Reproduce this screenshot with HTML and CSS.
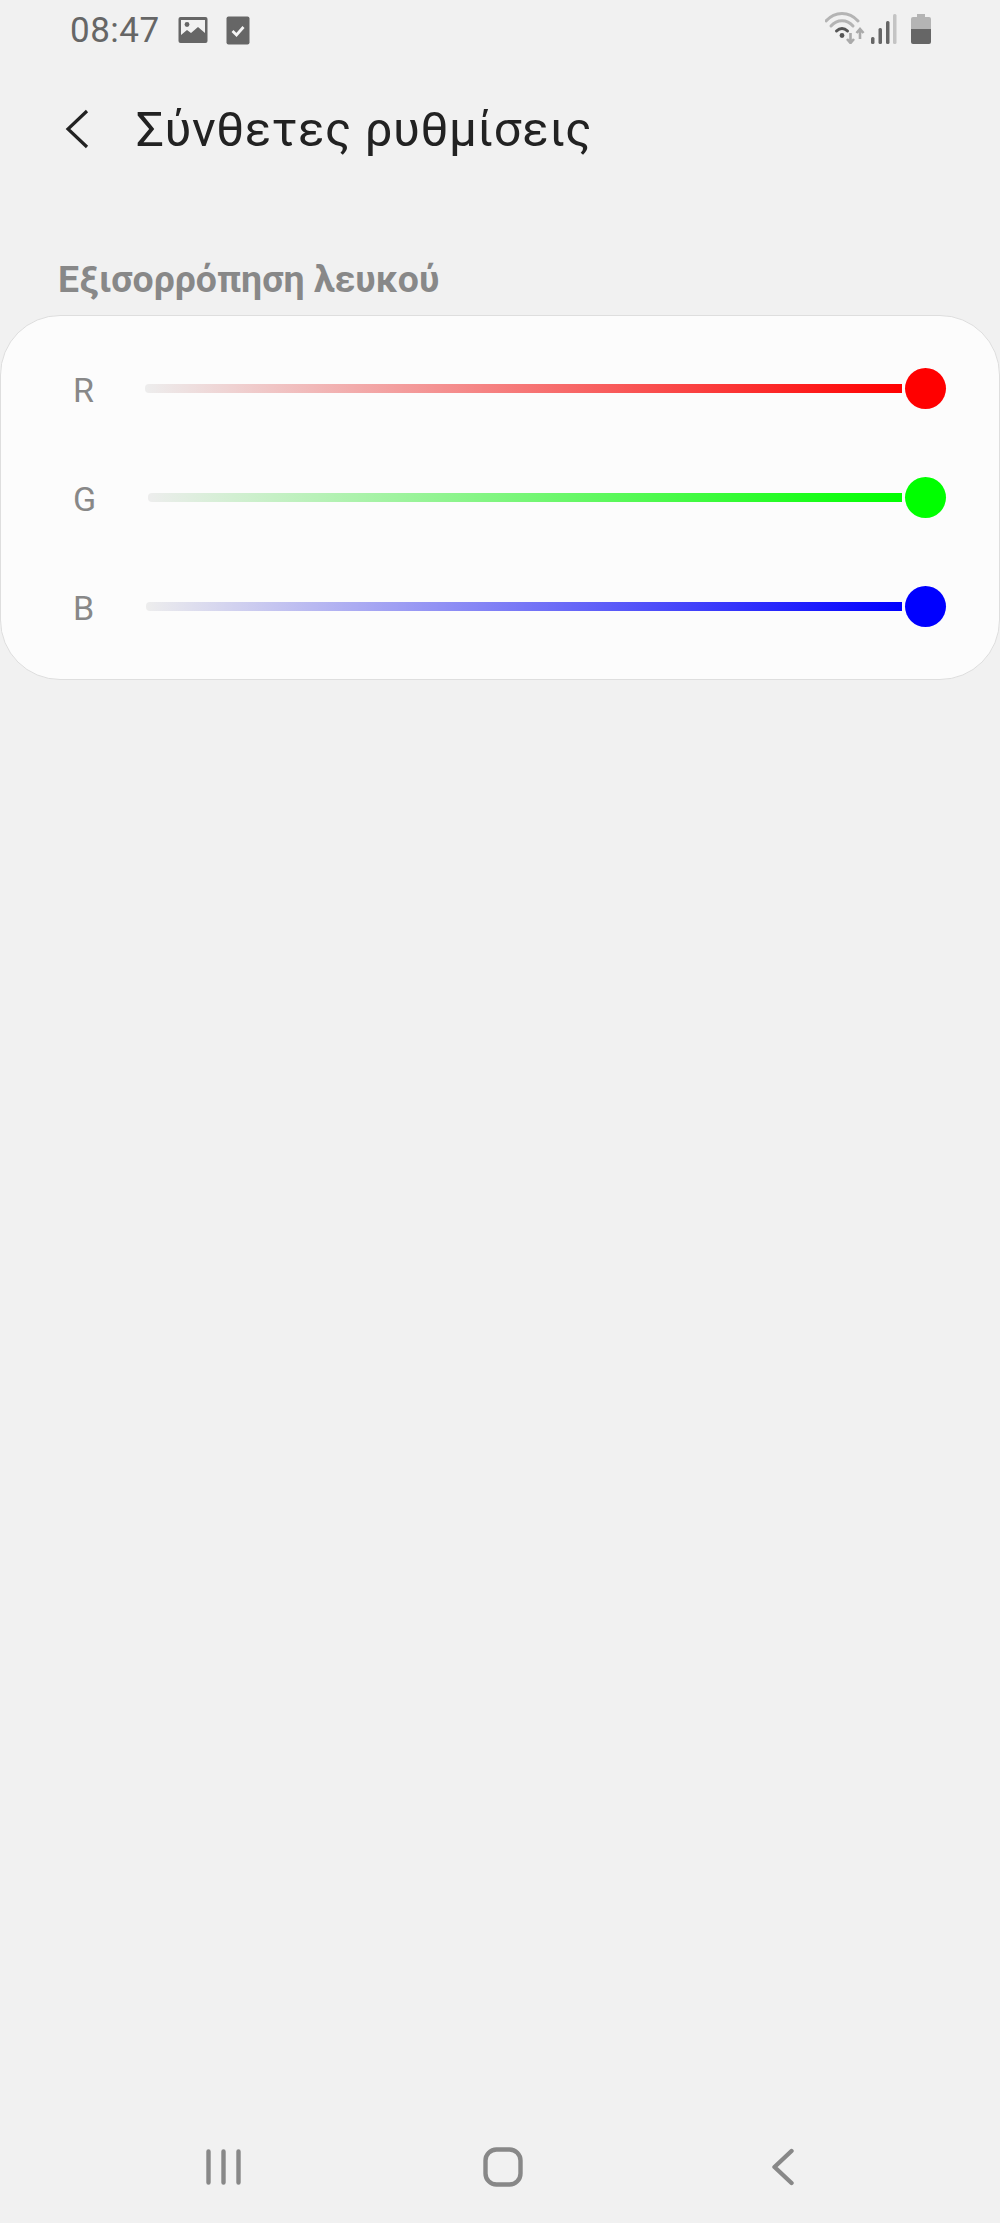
FILE: index.html
```html
<!DOCTYPE html>
<html lang="el">
<head>
  <meta charset="UTF-8">
  <meta name="viewport" content="width=device-width, initial-scale=1">
  <title>Σύνθετες ρυθμίσεις</title>
  <link rel="stylesheet" href="styles.css">
</head>
<body>

  <div class="status">
    <span class="hora">08:47</span>
    <svg class="ico-foto" width="30" height="28" viewBox="0 0 30 28">
      <rect x="0.5" y="1" width="29" height="26" rx="2" fill="#666"/>
      <rect x="3" y="4" width="24" height="17" fill="#f1f1f1"/>
      <circle cx="9" cy="8.500" r="2.400" fill="#666"/>
      <path d="M3 19l6-5 4 3 7-6 7 6v6H3z" fill="#666"/>
    </svg>
    <svg class="ico-check" width="24" height="29" viewBox="0 0 24 29">
      <rect x="0.5" y="0.5" width="23" height="28" rx="2" fill="#666"/>
      <path d="M6.500 15l4 4 7-8" fill="none" stroke="#f5f5f5" stroke-width="2.800"/>
    </svg>
    <div class="status-dir">
      <svg width="50" height="32" viewBox="0 0 50 32">
        <path d="M1 9C10-1 24-1 33 9" fill="none" stroke="#b4b4b4" stroke-width="3" stroke-linecap="round"/>
        <path d="M6 14c6-7 16-7 22 0" fill="none" stroke="#b4b4b4" stroke-width="3" stroke-linecap="round"/>
        <path d="M11.500 19c3.500-3.500 7.500-3.500 11 0" fill="none" stroke="#555" stroke-width="3" stroke-linecap="round"/>
        <circle cx="17" cy="23.500" r="2.400" fill="#555"/>
        <path d="M25.500 21v10M22 27l3.500 4 3.500-4" fill="none" stroke="#aaa" stroke-width="2.600"/>
        <path d="M35 27V17M31.500 21l3.500-4 3.500 4" fill="none" stroke="#aaa" stroke-width="2.600"/>
      </svg>
      <svg class="ico-sinal" width="26" height="30" viewBox="0 0 26 30">
        <rect x="0" y="23" width="3.500" height="7" rx="1.500" fill="#666"/>
        <rect x="7.500" y="14" width="3.500" height="16" rx="1.500" fill="#666"/>
        <rect x="15" y="7" width="3.500" height="23" rx="1.500" fill="#666"/>
        <rect x="22" y="0" width="3.500" height="30" rx="1.500" fill="#c4c4c4"/>
      </svg>
      <svg class="ico-bateria" width="20" height="30" viewBox="0 0 20 30">
        <path d="M6 0h8v3h4a2 2 0 0 1 2 2v10H0V5a2 2 0 0 1 2-2h4z" fill="#b4b4b4"/>
        <path d="M0 15h20v13a2 2 0 0 1-2 2H2a2 2 0 0 1-2-2z" fill="#666"/>
      </svg>
    </div>
  </div>

  <div class="topo">
    <svg class="voltar" width="24" height="40" viewBox="0 0 24 40">
      <path d="M22 2L3 20l19 18" fill="none" stroke="#222" stroke-width="3.200"/>
    </svg>
    <h1>Σύνθετες ρυθμίσεις</h1>
  </div>

  <h2>Εξισορρόπηση λευκού</h2>

  <div class="cartao">
    <div class="linha linha-r">
      <span class="letra">R</span>
      <div class="faixa"></div>
      <div class="bola"></div>
    </div>
    <div class="linha linha-g">
      <span class="letra">G</span>
      <div class="faixa"></div>
      <div class="bola"></div>
    </div>
    <div class="linha linha-b">
      <span class="letra">B</span>
      <div class="faixa"></div>
      <div class="bola"></div>
    </div>
  </div>

  <div class="nav">
    <svg width="35" height="36" viewBox="0 0 35 36">
      <path d="M2.500 2.500v31M17.500 2.500v31M32.500 2.500v31" fill="none" stroke="#888" stroke-width="4.400" stroke-linecap="round"/>
    </svg>
    <svg width="40" height="40" viewBox="0 0 40 40">
      <rect x="2.500" y="2.500" width="35" height="35" rx="11" fill="none" stroke="#888" stroke-width="4.400"/>
    </svg>
    <svg width="22" height="38" viewBox="0 0 22 38">
      <path d="M19.500 3L2.500 19l17 16" fill="none" stroke="#888" stroke-width="4.400" stroke-linecap="round" stroke-linejoin="round"/>
    </svg>
  </div>

</body>
</html>
```

FILE: styles.css
```css
* {
  box-sizing: border-box;
  margin: 0;
  padding: 0;
  font-family: 'Roboto', sans-serif;
}
html, body {
  height: 100%;
}
body {
  background: #f1f1f1;
  display: flex;
  flex-direction: column;
  overflow: hidden;
}
.status {
  display: flex;
  align-items: center;
  height: 44px;
  margin-top: 8px;
  padding: 0 69px 0 70px;
  color: #666;
}
.hora {
  font-size: 35px;
  letter-spacing: 0.5px;
}
.ico-foto {
  margin-left: 18px;
}
.ico-check {
  margin-left: 18px;
}
.status-dir {
  margin-left: auto;
  margin-bottom: 4px;
  display: flex;
  align-items: flex-end;
}
.ico-sinal {
  margin: 0 0 0 -4px;
}
.ico-bateria {
  margin-left: 14px;
}
.topo {
  display: flex;
  align-items: center;
  height: 60px;
  margin-top: 47px;
  padding-left: 65px;
  color: #222;
}
h1 {
  margin-left: 47px;
  font-size: 49px;
  font-weight: 400;
  letter-spacing: 0.6px;
  white-space: nowrap;
}
h2 {
  margin-top: 99px;
  padding-left: 58px;
  font-size: 37.4px;
  line-height: 42px;
  font-weight: 700;
  color: #888;
}
.cartao {
  margin-top: 15px;
  height: 365px;
  background: #fcfcfc;
  border: 1px solid #dedede;
  border-radius: 60px;
  padding-top: 42px;
}
.linha {
  display: flex;
  align-items: center;
  height: 60px;
  margin-bottom: 49px;
  padding-right: 53px;
}
.letra {
  width: 143px;
  padding-left: 72px;
  padding-top: 4px;
  font-size: 34px;
  color: #888;
}
.faixa {
  flex: 1;
  height: 9px;
  border-radius: 4px 0 0 4px;
}
.bola {
  width: 41px;
  height: 41px;
  margin-left: 3px;
  border-radius: 50%;
}
.linha-r .faixa { background: linear-gradient(90deg, #ededed, #ff0000); margin-left: 1px; }
.linha-g .faixa { background: linear-gradient(90deg, #ededed, #00ff00); margin-left: 4px; }
.linha-b .faixa { background: linear-gradient(90deg, #ededed, #0000ff); margin-left: 2px; }
.linha-r .bola { background: #ff0000; }
.linha-g .bola { background: #00ff00; }
.linha-b .bola { background: #0000ff; }
.nav {
  margin-top: auto;
  display: grid;
  grid-template-columns: repeat(3, 280px);
  justify-items: center;
  align-items: center;
  padding: 0 76px 36px 83px;
}
```
